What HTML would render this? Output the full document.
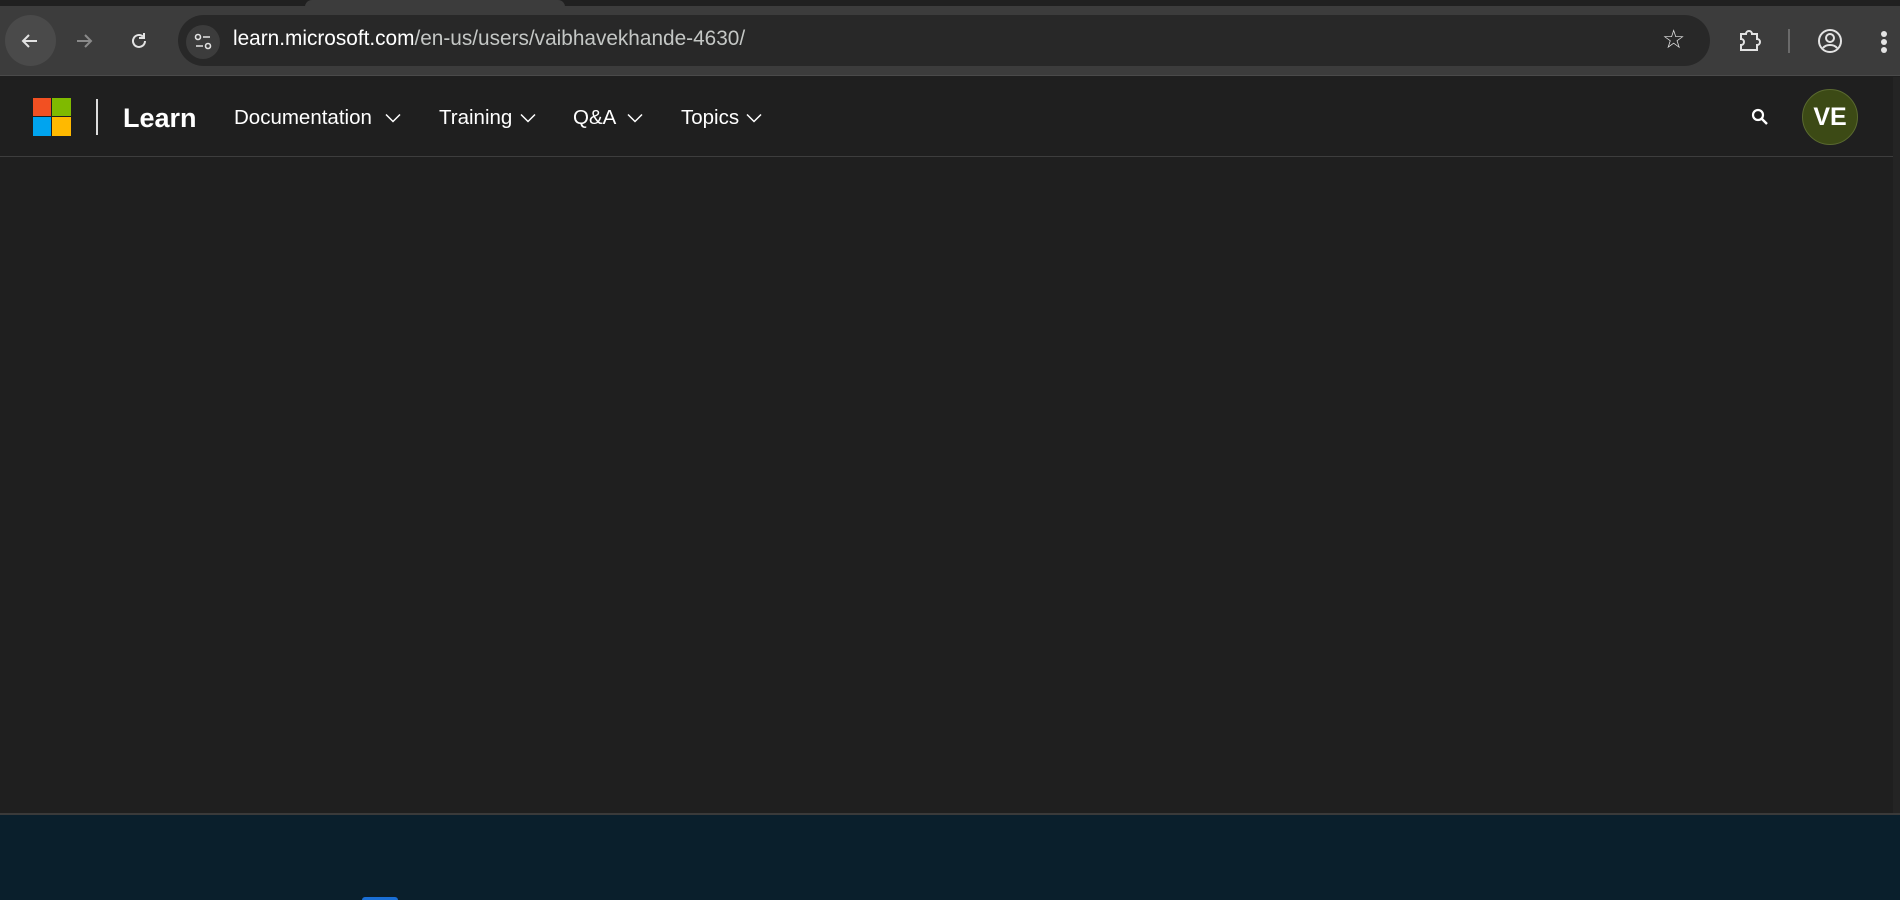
<!DOCTYPE html>
<html><head><meta charset="utf-8"><style>
*{margin:0;padding:0;box-sizing:border-box}
body{width:1900px;height:900px;overflow:hidden;background:#1f1f1f;font-family:"Liberation Sans",Arial,sans-serif;position:relative}
.abs{position:absolute}
.nav{position:absolute;top:106px;font-size:20.5px;color:#fff;white-space:nowrap}
.chev{position:absolute;top:113px}
</style></head><body>
<!-- tab strip -->
<div class="abs" style="left:0;top:0;width:1900px;height:7px;background:#202020"></div>
<div class="abs" style="left:305px;top:0;width:260px;height:7px;background:#3c3c3c;border-radius:8px 8px 0 0"></div>
<!-- toolbar -->
<div class="abs" style="left:0;top:6px;width:1900px;height:70px;background:#3c3c3c;border-bottom:1px solid #4a4a4a"></div>
<div class="abs" style="left:5px;top:15px;width:51px;height:51px;border-radius:50%;background:#4a4a4a"></div>
<svg class="abs" style="left:18px;top:29px" width="24" height="24" viewBox="0 0 24 24"><path d="M19 12H5M11 6l-6 6 6 6" stroke="#e3e3e3" stroke-width="2" fill="none"/></svg>
<svg class="abs" style="left:72px;top:29px" width="24" height="24" viewBox="0 0 24 24"><path d="M5 12h14M13 6l6 6-6 6" stroke="#8a8a8a" stroke-width="2" fill="none"/></svg>
<svg class="abs" style="left:127px;top:29px" width="24" height="24" viewBox="0 0 24 24"><path d="M18 12a6 6 0 1 1-2-4.5" stroke="#e3e3e3" stroke-width="2" fill="none"/><path d="M17 4v5h-5" stroke="#e3e3e3" stroke-width="2" fill="none"/></svg>
<div class="abs" style="left:178px;top:15px;width:1532px;height:51px;border-radius:26px;background:#282828"></div>
<div class="abs" style="left:186px;top:25px;width:34px;height:34px;border-radius:50%;background:#3c3c3c"></div>
<svg class="abs" style="left:193px;top:32px" width="20" height="20" viewBox="0 0 20 20"><circle cx="5" cy="5" r="2.5" stroke="#e3e3e3" stroke-width="1.6" fill="none"/><path d="M10 5h7M3 14h7" stroke="#e3e3e3" stroke-width="1.6"/><circle cx="15" cy="14" r="2.5" stroke="#e3e3e3" stroke-width="1.6" fill="none"/></svg>
<div class="abs" style="left:233px;top:27px;font-size:20.8px;color:#c4c7c5;white-space:nowrap"><span style="color:#fff">learn.microsoft.com</span>/en-us/users/vaibhavekhande-4630/</div>
<div class="abs" style="left:1662px;top:24px;font-size:26px;color:#e3e3e3">☆</div>
<svg class="abs" style="left:1737px;top:28px" width="26" height="26" viewBox="0 0 26 26"><path d="M4 6h5a3 3 0 0 1 6 0h5v5a3 3 0 0 1 0 6v5H4v-5a3 3 0 0 0 0-6z" stroke="#e3e3e3" stroke-width="2" fill="none"/></svg>
<div class="abs" style="left:1788px;top:29px;width:2px;height:24px;background:#6a6a6a"></div>
<svg class="abs" style="left:1817px;top:28px" width="26" height="26" viewBox="0 0 26 26"><circle cx="13" cy="13" r="11" stroke="#e3e3e3" stroke-width="2" fill="none"/><circle cx="13" cy="10" r="4" stroke="#e3e3e3" stroke-width="2" fill="none"/><path d="M6 20c3-4 11-4 14 0" stroke="#e3e3e3" stroke-width="2" fill="none"/></svg>
<div class="abs" style="left:1881px;top:31px;width:6px;height:6px;border-radius:50%;background:#e3e3e3"></div>
<div class="abs" style="left:1881px;top:39px;width:6px;height:6px;border-radius:50%;background:#e3e3e3"></div>
<div class="abs" style="left:1881px;top:47px;width:6px;height:6px;border-radius:50%;background:#e3e3e3"></div>
<!-- scrollbar column -->
<div class="abs" style="left:1893px;top:77px;width:7px;height:738px;background:#242424"></div>
<!-- header -->
<div class="abs" style="left:0;top:156px;width:1893px;height:1px;background:#3d3d3d"></div>
<div class="abs" style="left:33px;top:98px;width:18px;height:18px;background:#f25022"></div>
<div class="abs" style="left:52px;top:98px;width:19px;height:18px;background:#7fba00"></div>
<div class="abs" style="left:33px;top:117px;width:18px;height:19px;background:#00a4ef"></div>
<div class="abs" style="left:52px;top:117px;width:19px;height:19px;background:#ffb900"></div>
<div class="abs" style="left:96px;top:99px;width:2px;height:36px;background:#ddd"></div>
<div class="abs" style="left:123px;top:103px;font-size:27px;font-weight:bold;color:#fff">Learn</div>
<div class="nav" style="left:234px">Documentation</div>
<div class="nav" style="left:439px">Training</div>
<div class="nav" style="left:573px">Q&amp;A</div>
<div class="nav" style="left:681px">Topics</div>
<svg class="chev" style="left:385px" width="16" height="10" viewBox="0 0 16 10"><path d="M1 1.5l7 7 7-7" stroke="#fff" stroke-width="1.5" fill="none"/></svg>
<svg class="chev" style="left:520px" width="16" height="10" viewBox="0 0 16 10"><path d="M1 1.5l7 7 7-7" stroke="#fff" stroke-width="1.5" fill="none"/></svg>
<svg class="chev" style="left:627px" width="16" height="10" viewBox="0 0 16 10"><path d="M1 1.5l7 7 7-7" stroke="#fff" stroke-width="1.5" fill="none"/></svg>
<svg class="chev" style="left:746px" width="16" height="10" viewBox="0 0 16 10"><path d="M1 1.5l7 7 7-7" stroke="#fff" stroke-width="1.5" fill="none"/></svg>
<svg class="abs" style="left:1751px;top:108px" width="18" height="18" viewBox="0 0 18 18"><circle cx="7" cy="7" r="5" stroke="#fff" stroke-width="2.2" fill="none"/><path d="M11 11l5 5" stroke="#fff" stroke-width="2.4"/></svg>
<div class="abs" style="left:1802px;top:89px;width:56px;height:56px;border-radius:50%;background:#3c4a15;border:1px solid #5a6a30;color:#fff;font-weight:bold;font-size:25px;text-align:center;line-height:54px">VE</div>
<!-- footer -->
<div class="abs" style="left:0;top:813px;width:1900px;height:2px;background:#3a3a3a"></div>
<div class="abs" style="left:0;top:815px;width:1900px;height:85px;background:#0a1f2c"></div>
<div class="abs" style="left:362px;top:897px;width:36px;height:3px;background:#1a6fd6;border-radius:3px 3px 0 0"></div>
</body></html>
